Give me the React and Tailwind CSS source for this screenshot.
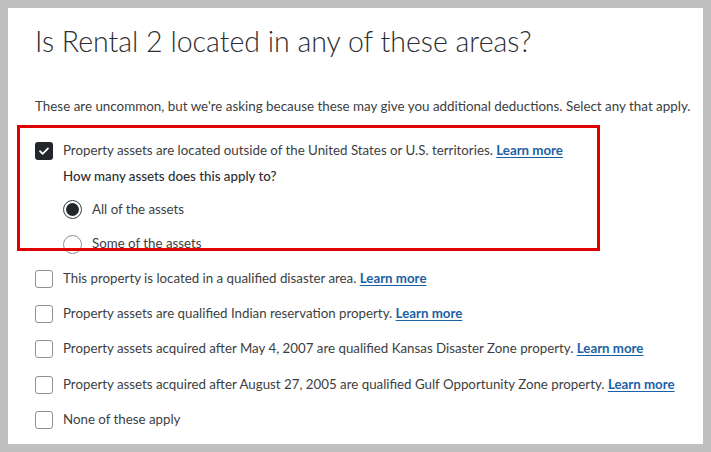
const font = { fontFamily: 'Lato, "Noto Sans", sans-serif' };

function Link() {
  return (
    <a href="#" className="font-bold text-[#1b5fa5] underline underline-offset-2">
      Learn more
    </a>
  );
}

function Box({ checked }) {
  if (checked) {
    return (
      <span className="flex h-[18px] w-[18px] shrink-0 items-center justify-center rounded-[3px] bg-[#23272b]">
        <svg width="12" height="12" viewBox="0 0 12 12" fill="none">
          <path d="M2 6.2l2.6 2.6L10 3.4" stroke="#fff" strokeWidth="1.8" strokeLinecap="round" strokeLinejoin="round" />
        </svg>
      </span>
    );
  }
  return <span className="h-[18px] w-[18px] shrink-0 rounded-[3px] border border-[#8d9096] bg-white" />;
}

function Radio({ checked }) {
  return (
    <span
      className={
        'flex h-[19px] w-[19px] shrink-0 items-center justify-center rounded-full border ' +
        (checked ? 'border-[#393a3d]' : 'border-[#8d9096]')
      }
    >
      {checked && <span className="h-[13px] w-[13px] rounded-full bg-[#23272b]" />}
    </span>
  );
}

const rows = [
  { text: 'This property is located in a qualified disaster area.', link: true },
  { text: 'Property assets are qualified Indian reservation property.', link: true },
  { text: 'Property assets acquired after May 4, 2007 are qualified Kansas Disaster Zone property.', link: true },
  { text: 'Property assets acquired after August 27, 2005 are qualified Gulf Opportunity Zone property.', link: true },
  { text: 'None of these apply', link: false },
];

export default function App() {
  return (
    <div className="relative h-[452px] w-[711px] bg-[#c0c0c0] p-2" style={font}>
      <div className="h-full bg-white pl-[27px] pt-[13px] text-[13.3px] text-[#3d3e41]">
        <h1 className="text-[28.5px] font-light leading-[40px] text-[#2d2e31]">
          Is Rental 2 located in any of these areas?
        </h1>

        <p className="mt-[36px] text-[13.4px] leading-[18px]">
          These are uncommon, but we're asking because these may give you additional deductions. Select any that apply.
        </p>

        <div className="mt-[18px]">
          <div className="flex h-[35px] items-center gap-[10px]">
            <Box checked />
            <span>
              Property assets are located outside of the United States or U.S. territories. <Link />
            </span>
          </div>
          <div className="pl-[28px]">
            <p className="flex h-[17px] items-center font-medium text-[#2d2e31]">How many assets does this apply to?</p>
            <div className="mt-[7px] flex h-[35px] items-center gap-[10px]">
              <Radio checked />
              <span>All of the assets</span>
            </div>
            <div className="flex h-[34px] items-center gap-[10px]">
              <Radio />
              <span>Some of the assets</span>
            </div>
          </div>

          {rows.map((r) => (
            <div key={r.text} className="flex h-[35.3px] items-center gap-[10px]">
              <Box />
              <span>
                {r.text}
                {r.link && (
                  <>
                    {' '}
                    <Link />
                  </>
                )}
              </span>
            </div>
          ))}
        </div>
      </div>

      {/* red annotation frame */}
      <div className="pointer-events-none absolute left-[17px] top-[125px] h-[126px] w-[583px] border-[3px] border-[#e40000]" />
    </div>
  );
}
